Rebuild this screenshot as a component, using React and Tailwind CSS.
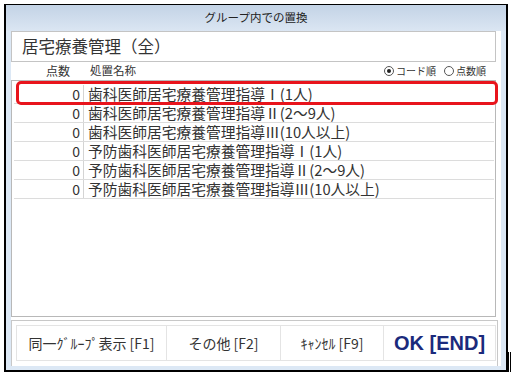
import React from "react";

const rows = [
  "歯科医師居宅療養管理指導Ⅰ(1人)",
  "歯科医師居宅療養管理指導Ⅱ(2〜9人)",
  "歯科医師居宅療養管理指導Ⅲ(10人以上)",
  "予防歯科医師居宅療養管理指導Ⅰ(1人)",
  "予防歯科医師居宅療養管理指導Ⅱ(2〜9人)",
  "予防歯科医師居宅療養管理指導Ⅲ(10人以上)",
];

const font = { fontFamily: '"Noto Sans CJK JP", "Noto Sans", sans-serif' };

function Radio({ checked, label }) {
  return (
    <div className="flex items-center gap-[2px]">
      <span className="w-[10px] h-[10px] rounded-full border border-[#555] bg-white flex items-center justify-center">
        {checked && <span className="w-[4px] h-[4px] rounded-full bg-[#222]" />}
      </span>
      <span className="text-[10px] leading-[12px] text-[#333]">{label}</span>
    </div>
  );
}

export default function App() {
  return (
    <div className="w-[513px] h-[377px] bg-white relative overflow-hidden" style={font}>
      <div className="ml-[4px] mt-[4px] w-[504px] h-[368px] border-l-2 border-r-2 border-b-2 border-t border-black flex flex-col bg-[#dce8f5]">
        <div className="h-[26px] flex items-center justify-center bg-gradient-to-b from-[#c3d3e6] to-[#dbe6f3] text-[11.5px] text-[#222]">
          グループ内での置換
        </div>
        <div className="flex-1 ml-[5px] mr-[5px] mb-[4px] bg-white flex flex-col">
          <div className="w-[485px] h-[31px] border border-[#c4c4c4] flex items-center pl-[10px] text-[16.5px] text-[#333] leading-none">
            居宅療養管理（全）
          </div>
          <div className="w-[485px] h-[18px] flex items-center">
            <div className="w-[59px] text-right text-[12px] leading-none text-[#333]">点数</div>
            <div className="ml-[20px] text-[11.5px] leading-none text-[#333]">処置名称</div>
            <div className="ml-auto mr-[10px] flex items-center gap-[8px]">
              <Radio checked label="コード順" />
              <Radio label="点数順" />
            </div>
          </div>
          <div className="w-[485px] h-[237px] border border-[#b8b8b8] pt-[4px] pl-[2px] pr-[1px]">
            {rows.map((r, i) => (
              <div key={i} className="h-[19px] flex border-b border-[#dcdcdc] items-center">
                <div className="w-[70px] h-full border-r border-[#d4d4d4] flex items-center justify-end pr-[3px] text-[14px] text-[#333] leading-none">
                  0
                </div>
                <div className="pl-[4px] text-[14.75px] text-[#333] leading-none whitespace-nowrap">{r}</div>
              </div>
            ))}
          </div>
          <div className="mt-[3px] flex-1 border-l border-t border-r border-[#c8c8c8] w-[487px] pl-[4px] pt-[4px] flex">
            <div className="flex h-[36px] w-[480px] border border-[#e4e4e4]">
              <div className="w-[150px] border-r border-[#e4e4e4] flex items-center justify-center text-[14px] text-[#333]">
                同一ｸﾞﾙｰﾌﾟ表示 [F1]
              </div>
              <div className="w-[114px] border-r border-[#e4e4e4] flex items-center justify-center text-[14px] text-[#333]">
                その他 [F2]
              </div>
              <div className="w-[103px] border-r border-[#e4e4e4] flex items-center justify-center text-[14px] text-[#333]">
                ｷｬﾝｾﾙ [F9]
              </div>
              <div className="flex-1 flex items-center justify-center text-[20px] font-bold text-[#1b2a7c]" style={{ fontFamily: '"Liberation Sans", "Noto Sans", sans-serif' }}>
                OK [END]
              </div>
            </div>
          </div>
        </div>
      </div>
      <div className="absolute left-[16px] top-[81px] w-[482px] h-[24px] border-[3px] border-[#e8141c] rounded-[5px]" />
      <div className="absolute left-[508px] top-[352px] w-[3px] h-[20px] border-l border-r border-black" />
    </div>
  );
}
